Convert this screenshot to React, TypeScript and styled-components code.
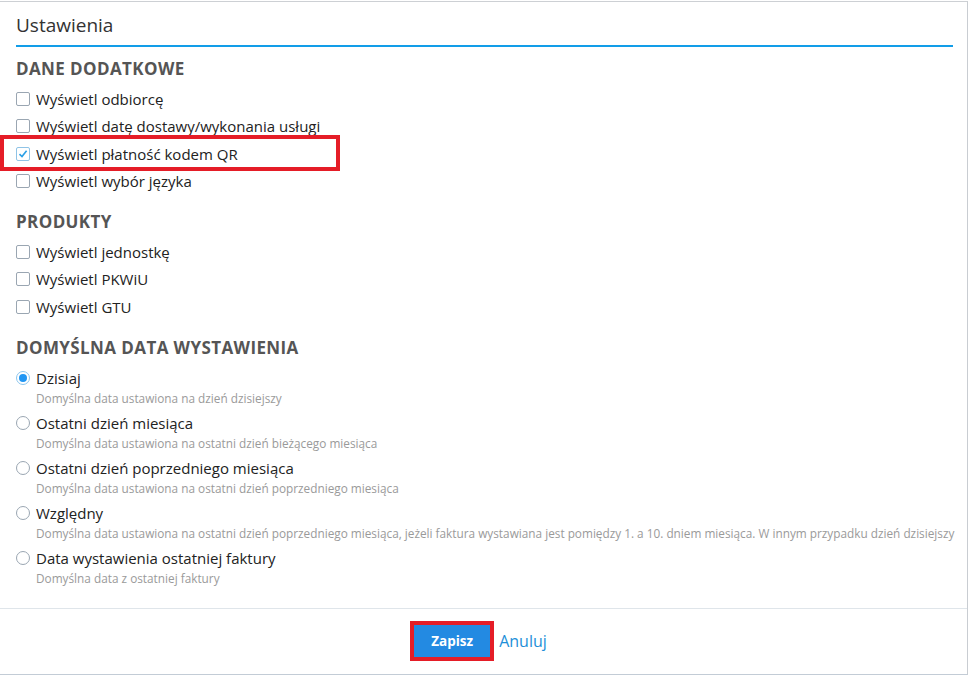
import React from 'react'
import styled, { createGlobalStyle } from 'styled-components'

const GlobalStyle = createGlobalStyle`
  body {
    margin: 0;
    background: #ffffff;
    font-family: "Open Sans", "Noto Sans", sans-serif;
    color: #222;
  }
`

const Frame = styled.div`
  margin-top: 1px;
  width: 967px;
  border-top: 1px solid #cdd0d4;
  border-right: 1px solid #c9cdd2;
  border-bottom: 1px solid #c3ccd6;
  background: #fff;
`

const Header = styled.div`
  margin: 0 14px 0 16px;
  padding: 11px 0 8px;
  border-bottom: 2px solid #129de8;
`

const Title = styled.h1`
  margin: 0;
  font-size: 19px;
  line-height: 24px;
  font-weight: 400;
  color: #333;
`

const Body = styled.div`
  padding: 12px 16px 23px;
`

const SectionTitle = styled.h2<{ $first?: boolean }>`
  margin: ${(p) => (p.$first ? '0' : '17px')} 0 6px;
  font-size: 17px;
  line-height: 20px;
  font-weight: 700;
  color: #555;
  letter-spacing: 0.4px;
`

const CheckRow = styled.label<{ $highlight?: boolean }>`
  position: relative;
  display: flex;
  align-items: center;
  gap: 6px;
  height: 27.5px;
  font-size: 15px;
  color: #222;

  ${(p) =>
    p.$highlight &&
    `
    &::after {
      content: '';
      position: absolute;
      left: -16px;
      top: -5px;
      width: 332px;
      height: 28px;
      border: 4px solid #e51d27;
    }
  `}
`

const Box = styled.span<{ $checked?: boolean }>`
  display: inline-flex;
  align-items: center;
  justify-content: center;
  flex-shrink: 0;
  width: 12px;
  height: 12px;
  border: 1px solid ${(p) => (p.$checked ? '#8fc3e6' : '#9aa6b2')};
  border-radius: 2px;
  background: #fff;
`

const RadioList = styled.div`
  margin-top: 10px;
`

const RadioItem = styled.div`
  display: flex;
  flex-direction: column;
  gap: 3px;
  margin-bottom: 8px;
  &:last-child {
    margin-bottom: 0;
  }
`

const RadioLabel = styled.label`
  display: flex;
  align-items: center;
  gap: 6px;
  height: 20px;
  font-size: 15px;
  color: #222;
`

const Circle = styled.span<{ $checked?: boolean }>`
  box-sizing: border-box;
  display: inline-flex;
  align-items: center;
  justify-content: center;
  flex-shrink: 0;
  width: 14px;
  height: 14px;
  border-radius: 50%;
  border: 1px solid ${(p) => (p.$checked ? '#8cc6ee' : '#9aa6b2')};
  background: #fff;

  &::after {
    content: '';
    display: ${(p) => (p.$checked ? 'block' : 'none')};
    width: 8px;
    height: 8px;
    border-radius: 50%;
    background: #2196f3;
  }
`

const Hint = styled.div`
  padding-left: 20px;
  font-size: 11.8px;
  line-height: 14px;
  color: #9a9a9a;
  white-space: nowrap;
`

const Footer = styled.div`
  display: flex;
  align-items: center;
  justify-content: center;
  gap: 9px;
  height: 65px;
  padding-right: 6px;
  border-top: 1px solid #dfe5ea;
`

const SaveButton = styled.button`
  width: 76px;
  height: 32px;
  border: none;
  background: #238ae2;
  color: #fff;
  font-family: inherit;
  font-size: 13.5px;
  font-weight: 700;
  outline: 4px solid #e51d27;
`

const CancelLink = styled.a`
  font-size: 16px;
  color: #1d8fd8;
  text-decoration: none;
`

function Check({ checked }: { checked?: boolean }) {
  return (
    <Box $checked={checked}>
      {checked && (
        <svg width="10" height="10" viewBox="0 0 10 10">
          <path d="M1.5 5.2 L4 7.6 L8.6 1.8" fill="none" stroke="#2a9fe6" strokeWidth="1.6" />
        </svg>
      )}
    </Box>
  )
}

const extra = [
  { label: 'Wyświetl odbiorcę' },
  { label: 'Wyświetl datę dostawy/wykonania usługi' },
  { label: 'Wyświetl płatność kodem QR', checked: true, highlight: true },
  { label: 'Wyświetl wybór języka' },
]

const products = ['Wyświetl jednostkę', 'Wyświetl PKWiU', 'Wyświetl GTU']

const dates = [
  { label: 'Dzisiaj', hint: 'Domyślna data ustawiona na dzień dzisiejszy', checked: true },
  { label: 'Ostatni dzień miesiąca', hint: 'Domyślna data ustawiona na ostatni dzień bieżącego miesiąca' },
  {
    label: 'Ostatni dzień poprzedniego miesiąca',
    hint: 'Domyślna data ustawiona na ostatni dzień poprzedniego miesiąca',
  },
  {
    label: 'Względny',
    hint: 'Domyślna data ustawiona na ostatni dzień poprzedniego miesiąca, jeżeli faktura wystawiana jest pomiędzy 1. a 10. dniem miesiąca. W innym przypadku dzień dzisiejszy',
  },
  { label: 'Data wystawienia ostatniej faktury', hint: 'Domyślna data z ostatniej faktury' },
]

export default function App() {
  return (
    <>
      <GlobalStyle />
      <Frame>
        <Header>
          <Title>Ustawienia</Title>
        </Header>
        <Body>
          <SectionTitle $first>DANE DODATKOWE</SectionTitle>
          {extra.map((item) => (
            <CheckRow key={item.label} $highlight={item.highlight}>
              <Check checked={item.checked} />
              {item.label}
            </CheckRow>
          ))}

          <SectionTitle>PRODUKTY</SectionTitle>
          {products.map((label) => (
            <CheckRow key={label}>
              <Check />
              {label}
            </CheckRow>
          ))}

          <SectionTitle>DOMYŚLNA DATA WYSTAWIENIA</SectionTitle>
          <RadioList>
            {dates.map((d) => (
              <RadioItem key={d.label}>
                <RadioLabel>
                  <Circle $checked={d.checked} />
                  {d.label}
                </RadioLabel>
                <Hint>{d.hint}</Hint>
              </RadioItem>
            ))}
          </RadioList>
        </Body>
        <Footer>
          <SaveButton>Zapisz</SaveButton>
          <CancelLink href="#">Anuluj</CancelLink>
        </Footer>
      </Frame>
    </>
  )
}
